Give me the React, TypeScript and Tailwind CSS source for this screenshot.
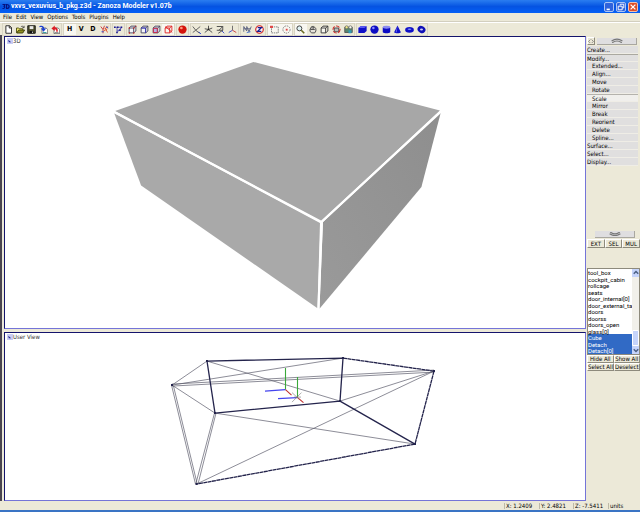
import { useState, type ReactNode } from "react";
import clsx from "clsx";

interface Tool {
  name: string;
  icon: ReactNode;
  pressed?: boolean;
}

interface ToolGroup {
  width: string;
  tools: Tool[];
}

const cube = (
  <>
    <path d="M1.5 4h6v6.500h-6zM1.500 4l2.500-2.500h6.500L7.500 4M10.500 1.500V8L7.500 10.500" fill="#f4f4f8" stroke="#454560" />
  </>
);

const letter = (text: string) => (
  <span className="text-[7px] leading-none font-bold text-black">{text}</span>
);

const svg = (children: ReactNode) => (
  <svg viewBox="0 0 12 12" className="size-[9px]" fill="none" strokeWidth="1.2" aria-hidden="true">
    {children}
  </svg>
);

const TOOL_GROUPS: ToolGroup[] = [
  {
    width: "w-[58px]",
    tools: [
      { name: "New", icon: svg(<path d="M2.500 1h5l2.500 2.500V11h-7.500zM7 1v3h3" fill="#fff" stroke="#222" />) },
      {
        name: "Open",
        icon: svg(
          <>
            <path d="M.700 10.500V4h3l1 1H9v2" fill="#f6ee6a" stroke="#4a4a10" />
            <path d="M1 10.700l2.500-4h8l-2.500 4z" fill="#8f8f20" stroke="#3a3a08" />
            <path d="M6.500 2.500c1.500-1.500 3-1 4 .800M10.800 1v2.500H8.500" stroke="#222" strokeWidth=".9" />
          </>
        ),
      },
      {
        name: "Save",
        icon: svg(
          <>
            <path d="M1 1h10v10H1z" fill="#4c4c28" stroke="#111" />
            <path d="M3.500 1.500h5v4h-5z" fill="#e9e9e9" />
            <path d="M3.500 8h5v3h-5z" fill="#111" />
            <path d="M7 8.500h1V10.500H7z" fill="#eee" />
          </>
        ),
      },
      {
        name: "Import",
        icon: svg(
          <>
            <path d="M4 4h5.500l2 2v5.500H4z" fill="#fff" stroke="#333" strokeWidth=".8" />
            <path d="M.500 1.500c4-1.500 6 0 6.500 3h2.500L6 9 2.500 4.500h2.500c-.500-1.500-2-2-4.500-1.500z" fill="#1d3fd0" />
            <path d="M5 10h5" stroke="#2a9a9a" />
          </>
        ),
      },
      {
        name: "Export",
        icon: svg(
          <>
            <path d="M4 4h5.500l2 2v5.500H4z" fill="#fff" stroke="#333" strokeWidth=".8" />
            <path d="M9 9C9.500 5 8 3 5 3V.500L.500 4.500 5 8V5.500c1.500 0 2.500 1.500 2 3.500z" fill="#dd1c24" />
            <path d="M5 10h5" stroke="#888" />
          </>
        ),
      },
    ],
  },
  {
    width: "w-[46px]",
    tools: [
      { name: "Horizontal", icon: letter("H"), pressed: true },
      { name: "Vertical", icon: letter("V") },
      { name: "Depth", icon: letter("D") },
      {
        name: "Local axes",
        icon: svg(
          <>
            <path d="M1 2l3 4M4 6l2-5M4 6v5" stroke="#c33" />
            <path d="M6 5l5-3M7 4l3 6M5 8l5-3" stroke="#e2542c" />
            <path d="M2 9h3M8 2l3 2" stroke="#2a4ccc" />
          </>
        ),
      },
    ],
  },
  {
    width: "w-[11px]",
    tools: [
      {
        name: "Polygons",
        icon: svg(
          <>
            <path d="M1 3h9L4 10l0-7M10 3L8 7H4" stroke="#5a5ab8" />
            <path d="M0 2h2v2H0zM4 2h2v2H4zM9 2h2v2H9zM7 6h2v2H7zM3 9h2v2H3z" fill="#1b1b8c" />
          </>
        ),
      },
    ],
  },
  {
    width: "w-[47px]",
    tools: [
      { name: "Vertices level", icon: svg(<>{cube}<path d="M1 4h1.500M7 4h1.500M1 10.500h1.500M7 10.500h1.500M10 1.500h1" stroke="#c22" strokeWidth="2" /></>) },
      { name: "Edges level", icon: svg(<>{cube}<path d="M1.500 4h6v6.500" stroke="#3434c8" /></>) },
      { name: "Polygons level", icon: svg(<>{cube}<path d="M2 4.500h5V10H2z" fill="#b6b4e8" stroke="#c24" /></>) },
      {
        name: "Object level",
        icon: svg(<path d="M1.500 4h6v6.500h-6zM1.500 4l2.500-2.500h6.500L7.500 4M10.500 1.500V8L7.500 10.500M2 2l9 8" stroke="#e02020" />),
        pressed: true,
      },
    ],
  },
  {
    width: "w-[11px]",
    tools: [
      {
        name: "Material editor",
        icon: svg(
          <>
            <circle cx="6" cy="6" r="5.500" fill="#d4140c" />
            <circle cx="4.500" cy="4" r="1.800" fill="#ff9a80" />
          </>
        ),
      },
    ],
  },
  {
    width: "w-[47px]",
    tools: [
      { name: "World axes", icon: svg(<><path d="M1 2l4 5 6-5M5 7l-4 3M5 7l5 4" stroke="#555" /><path d="M9 9l3 3" stroke="#34c" /></>) },
      { name: "Object axes", icon: svg(<><path d="M6 1v5L1 10M6 6l5 4M1 5l5 1 5-2" stroke="#444" /><path d="M5 5h2v2H5z" fill="#222" /></>) },
      { name: "Screen axes", icon: svg(<><path d="M1 2h8v5L3 11M9 2L4 7M1 7h8" stroke="#444" /><path d="M8 8l3 3" stroke="#34c" /></>) },
      { name: "Move axes", icon: svg(<><path d="M6 1v6" stroke="#666" /><path d="M6 7l-5 3" stroke="#34c" /><path d="M6 7l5 3" stroke="#c33" /></>) },
    ],
  },
  {
    width: "w-[24px]",
    tools: [
      {
        name: "Animation",
        icon: svg(
          <>
            <path d="M1 9V2l4 6V2l3 7 3-7M1 5h9" stroke="#5b6280" />
            <path d="M5 10l5-1" stroke="#36c" />
          </>
        ),
      },
      {
        name: "Z-buffer",
        icon: svg(
          <>
            <circle cx="6" cy="6" r="5" fill="#fff" stroke="#d01818" strokeWidth="1.500" />
            <path d="M3.500 3.500h5l-5 5h5" stroke="#1c1c90" strokeWidth="1.800" />
          </>
        ),
      },
    ],
  },
  {
    width: "w-[24px]",
    tools: [
      {
        name: "Rectangular selection",
        icon: svg(<><path d="M2 2.500h9v8H2z" stroke="#777" strokeDasharray="2 1" /><path d="M0 1h4v3H0z" fill="#e04848" /></>),
        pressed: true,
      },
      {
        name: "Circular selection",
        icon: svg(<><circle cx="6" cy="6" r="4.800" stroke="#777" strokeDasharray="2 1.200" /><path d="M5 5h2.500v2.500H5z" fill="#e04848" /></>),
        pressed: true,
      },
    ],
  },
  {
    width: "w-[59px]",
    tools: [
      {
        name: "Zoom",
        icon: svg(<><circle cx="4.500" cy="4.500" r="3.300" fill="#dff2f4" stroke="#333" /><path d="M7 7l4 4" stroke="#6b6b20" strokeWidth="2.200" /></>),
        pressed: true,
      },
      {
        name: "Pan",
        icon: svg(<path d="M2.500 6.500L4 3l1.500-1h2l1.500 1 1.500 2v3L9 10.500H5L3 9zM3 6h6M5.500 2.500V5M7.500 2.500V5" fill="#e6e2da" stroke="#444" />),
      },
      { name: "Fit view", icon: svg(<path d="M1.500 4h6v6.500h-6zM1.500 4l2.500-2.500h6.500L7.500 4M10.500 1.500V8L7.500 10.500" fill="#f7f6ee" stroke="#333" />) },
      {
        name: "Rotate view",
        icon: svg(<><path d="M3 4h6v5H3z" fill="#bbb" stroke="#444" /><circle cx="6" cy="6" r="4.700" stroke="#d03030" strokeDasharray="5 2" strokeWidth="1.500" /></>),
      },
      {
        name: "View options",
        icon: svg(
          <>
            <path d="M1 3h10v7H1z" fill="#58866c" stroke="#555" />
            <circle cx="3.500" cy="3" r="2" fill="#f2ec8a" stroke="#555" strokeWidth=".8" />
            <circle cx="8.500" cy="3" r="2" fill="#f8f8f0" stroke="#555" strokeWidth=".8" />
            <path d="M6 7h4v4H6z" fill="#2f9bb8" />
          </>
        ),
      },
    ],
  },
  {
    width: "w-[70px]",
    tools: [
      { name: "Box", icon: svg(<><path d="M.500 4l3-2.500h8V8l-3 2.500h-8z" fill="#1010c8" /><path d="M.500 4h8l3-2.500h-8z" fill="#5a5af4" /></>) },
      { name: "Sphere", icon: svg(<><circle cx="6" cy="6" r="5.500" fill="#0c0cc4" /><circle cx="4.500" cy="4" r="1.700" fill="#8c8cff" /></>) },
      { name: "Cylinder", icon: svg(<><path d="M1 3v6.500c2 2 8 2 10 0V3z" fill="#0c0cc4" /><ellipse cx="6" cy="3" rx="5" ry="1.900" fill="#8a8af0" /></>) },
      { name: "Cone", icon: svg(<><path d="M6 .500L1.500 9.500c1.500 2 7.500 2 9 0z" fill="#1010c8" /><path d="M6 1L3.500 9.500h1.500z" fill="#6868f0" /></>) },
      { name: "Disc", icon: svg(<><ellipse cx="6" cy="6.500" rx="5.800" ry="3.700" fill="#1010c8" /><ellipse cx="6" cy="5.500" rx="2.500" ry="1" fill="#7c8cf8" /></>) },
      { name: "Torus", icon: svg(<><ellipse cx="6" cy="6" rx="5.500" ry="4.500" transform="rotate(30 6 6)" fill="#1010b8" /><ellipse cx="6" cy="6" rx="2" ry="1.400" fill="#cfd2f6" /></>) },
    ],
  },
];

const MENU = ["File", "Edit", "View", "Options", "Tools", "Plugins", "Help"];

const COMMANDS = [
  { label: "Create..." },
  { label: "Modify...", open: true },
  { label: "Extended...", sub: true },
  { label: "Align...", sub: true },
  { label: "Move", sub: true },
  { label: "Rotate", sub: true },
  { label: "Scale", sub: true },
  { label: "Mirror", sub: true },
  { label: "Break", sub: true },
  { label: "Reorient", sub: true },
  { label: "Delete", sub: true },
  { label: "Spline...", sub: true },
  { label: "Surface..." },
  { label: "Select..." },
  { label: "Display..." },
];

const OBJECTS = [
  "tool_box",
  "cockpit_cabin",
  "rollcage",
  "seats",
  "door_internal[0]",
  "door_external_ta",
  "doors",
  "doorss",
  "doors_open",
  "glass[0]",
  "Cube",
  "Detach",
  "Detach[0]",
];

const RAISED = "border border-t-white border-l-white border-r-[#8d8a7c] border-b-[#8d8a7c] bg-[#ece9d8]";

function TitleBar() {
  return (
    <header className="flex h-[13px] shrink-0 items-center bg-linear-to-b from-[#2a7df0] via-[#0553e2] to-[#0560f6] px-[2px] text-white">
      <svg viewBox="0 0 16 12" className="h-[7px] w-2" aria-hidden="true">
        <path d="M1 2h5L4 5.500c3 1 1 5-3 4.500M9 2v8c7 0 7-8 0-8z" fill="none" stroke="#06107c" strokeWidth="2.200" />
      </svg>
      <h1 className="ml-px flex-1 truncate font-[Roboto,sans-serif] text-[7px] leading-[9px] font-bold">
        vxvs_vexuvius_b_pkg.z3d - Zanoza Modeler v1.07b
      </h1>
      <div className="flex gap-[2px]">
        <button aria-label="Minimize" className="flex size-[10px] items-center justify-center rounded-[2px] border border-[#a9c4f5] bg-[#2f63dc]">
          <svg viewBox="0 0 10 10" className="size-2"><path d="M2 8h4" stroke="#fff" strokeWidth="2" /></svg>
        </button>
        <button aria-label="Restore" className="flex size-[10px] items-center justify-center rounded-[2px] border border-[#a9c4f5] bg-[#2f63dc]">
          <svg viewBox="0 0 10 10" className="size-2" fill="none" stroke="#fff" strokeWidth="1.2">
            <path d="M4 3V1.500h4.500V6H7M1.500 4h5v4.500h-5z" />
          </svg>
        </button>
        <button aria-label="Close" className="flex size-[10px] items-center justify-center rounded-[2px] border border-[#f0c0b0] bg-[#dd4f2a]">
          <svg viewBox="0 0 10 10" className="size-2"><path d="M2 2l6 6M8 2l-6 6" stroke="#fff" strokeWidth="1.600" /></svg>
        </button>
      </div>
    </header>
  );
}

function Toolbar() {
  return (
    <div role="toolbar" className="flex h-[13px] shrink-0 items-center gap-[3px] border-t border-white pl-[3px]">
      {TOOL_GROUPS.map((group, i) => (
        <div key={i} className={clsx("flex h-[11px] shrink-0 outline outline-[#d8d4c4]", group.width)}>
          {group.tools.map((tool) => (
            <button
              key={tool.name}
              aria-label={tool.name}
              className={clsx("flex flex-1 items-center justify-center", tool.pressed && "bg-[#f8f7f1]")}
            >
              {tool.icon}
            </button>
          ))}
        </div>
      ))}
    </div>
  );
}

function Viewport({ title, className, children }: { title: string; className: string; children: ReactNode }) {
  return (
    <section
      className={clsx(
        "relative min-h-0 border border-t-[#14146c] border-r-[#7474d8] border-b-[#7474d8] border-l-[#14146c] bg-white",
        className
      )}
    >
      <button className="absolute top-px left-[2px] flex items-center text-[6px] leading-none text-[#333]">
        <svg viewBox="0 0 10 10" className="size-[6px]" aria-hidden="true">
          <path d="M0 0h10v10H0z" fill="#c8ccf4" />
          <path d="M2 3l5 4H3z" fill="#22228c" />
        </svg>
        {title}
      </button>
      {children}
    </section>
  );
}

function SolidBox() {
  return (
    <svg viewBox="5 37 580 291" className="size-full" role="img" aria-label="Shaded box">
      <defs>
        <linearGradient id="side" x1="0" y1="1" x2="1" y2="0">
          <stop offset="0" stopColor="#9a9a9a" />
          <stop offset="1" stopColor="#8e8e8e" />
        </linearGradient>
      </defs>
      <path d="M115 111L253.500 62 440 110.500 321 221.500z" fill="#a7a7a7" />
      <path d="M114 113L320 223 317.500 308.500 141 185.500z" fill="#a9a9a9" />
      <path d="M323 222L441 112 421.500 187 319.500 309z" fill="url(#side)" />
      <path d="M113.500 111.800L321.500 222 441.500 111.200M321.800 222L318.400 310" stroke="#fff" strokeWidth="2.200" fill="none" />
    </svg>
  );
}

function Wireframe() {
  return (
    <svg viewBox="5 333 580 167" className="size-full" fill="none" role="img" aria-label="Wireframe box">
      <g stroke="#5c5c6c" strokeWidth=".7">
        <path d="M207 361L172 385M172 385L343 358M207 361L340 401M172 385L215 413M215 413L415 444M196.500 484L434 371M340 401L434 371M172 384L434 370M172 386L434 372" />
        <path d="M171.500 385L195.500 484M173.500 386L197 483M214.500 413L196 483M216 413L198 484" />
      </g>
      <g stroke="#24244c" strokeWidth="1.300">
        <path d="M207 361L343 358M207 361L215 413M343 358L340 401M215 413L340 401M340 401L415 444" />
        <path d="M343 358L434 371M434 371L415 444M415 444L196.500 484" strokeDasharray="4 .4" />
      </g>
      <g strokeWidth="1.100">
        <path d="M285.500 389.500V368M297.500 397V377" stroke="#3aa83a" />
        <path d="M285.500 389.500L265 391M297 397.500L278 398.500" stroke="#4444ee" />
        <path d="M285.500 389.500L291.500 395M297 397L303.500 402.500" stroke="#c03030" />
        <path d="M292 392.500L299 399M301.500 392.500L292 402M294 397h7" stroke="#777" strokeWidth=".6" />
      </g>
      <path d="M171 384h2v2h-2zM206 360h2v2h-2zM342 357h2v2h-2zM433 370h2v2h-2zM414 443h2v2h-2zM195.500 483h2v2h-2zM214 412h2v2h-2zM339 400h2v2h-2z" fill="#24244c" />
    </svg>
  );
}

function SidePanel() {
  const [command, setCommand] = useState("Scale");
  const [selected, setSelected] = useState(["Cube", "Detach", "Detach[0]"]);

  return (
    <aside className="flex w-[54px] shrink-0 flex-col pt-[2px] pl-px">
      <div className="flex h-2 items-center gap-[2px]">
        <button aria-label="Toggle panel" className={clsx("flex size-2 shrink-0 items-center justify-center", RAISED)}>
          <svg viewBox="0 0 10 8" className="w-[6px] shrink-0" fill="none" stroke="#555"><path d="M4 1L1 4l3 3M6 1l3 3-3 3" /></svg>
        </button>
        <button aria-label="Scroll up" className="flex h-[7px] w-10 items-center justify-center border-r border-b border-[#a9a7a0] bg-[#dfdee0]">
          <svg viewBox="0 0 20 8" className="w-3" fill="none" stroke="#777" strokeWidth="2"><path d="M1 5q9-6 18 0M2 8q8-6 16 0" /></svg>
        </button>
      </div>

      <nav className="mt-px w-[51px]">
        {COMMANDS.map((c) => (
          <button
            key={c.label}
            onClick={() => setCommand(c.label)}
            className={clsx(
              "block h-2 w-full border-b border-b-[#efede6] text-left text-[6px] leading-[7px]",
              c.sub && "pl-[5px]",
              command === c.label ? "border-t border-t-[#b4b2ac] bg-[#f0efec] leading-[6px]" : "bg-[#e0dfdf]",
              c.open && "border-t border-t-[#aaa8a0] leading-[6px]"
            )}
          >
            {c.label}
          </button>
        ))}
      </nav>

      <button aria-label="Scroll down" className="mt-[65px] ml-2 flex h-[7px] w-10 shrink-0 items-center justify-center border-r border-b border-[#a9a7a0] bg-[#dfdee0]">
        <svg viewBox="0 0 20 8" className="w-3" fill="none" stroke="#777" strokeWidth="2"><path d="M1 3q9 6 18 0M2 0q8 6 16 0" /></svg>
      </button>
      <div className="mt-px flex h-[9px] shrink-0 text-[6px] leading-none">
        {["EXT", "SEL", "MUL"].map((mode) => (
          <button key={mode} className={clsx("flex-1", RAISED)}>{mode}</button>
        ))}
      </div>

      {/* Object list */}
      <div className="mt-5 flex h-[87px] shrink-0 border border-[#8d8a7c] bg-white">
        <select
          multiple
          aria-label="Objects"
          value={selected}
          onChange={(e) => setSelected(Array.from(e.target.selectedOptions, (o) => o.value))}
          className="h-full min-w-0 flex-1 appearance-none overflow-hidden font-[Roboto,sans-serif] text-[6px] text-black outline-none"
        >
          {OBJECTS.map((name) => (
            <option
              key={name}
              value={name}
              className="min-h-0 p-0 leading-[6px] odd:h-[7px] even:h-[6px] checked:bg-[#316ac5] checked:bg-linear-to-b checked:from-[#316ac5] checked:to-[#316ac5] checked:text-white!"
            >
              {name}
            </option>
          ))}
        </select>
        <div className="flex w-[7px] shrink-0 flex-col bg-[#f1f0ea]">
          <button aria-label="List up" className="flex h-2 items-center justify-center bg-[#c5d4fb]">
            <svg viewBox="0 0 8 8" className="size-[6px]" fill="none" stroke="#4d6185" strokeWidth="2"><path d="M1 5l3-3 3 3" /></svg>
          </button>
          <div className="mt-[53px] flex-1 rounded-[1px] border border-white bg-[#c5d4fb]" />
          <button aria-label="List down" className="flex h-2 items-center justify-center bg-[#c5d4fb]">
            <svg viewBox="0 0 8 8" className="size-[6px]" fill="none" stroke="#4d6185" strokeWidth="2"><path d="M1 3l3 3 3-3" /></svg>
          </button>
        </div>
      </div>
      <div className="grid shrink-0 grid-cols-2 text-[6px] leading-none whitespace-nowrap">
        {["Hide All", "Show All", "Select All", "Deselect"].map((label) => (
          <button key={label} className={clsx("h-2", RAISED)}>{label}</button>
        ))}
      </div>
    </aside>
  );
}

export default function App() {
  return (
    <div className="flex h-screen flex-col overflow-hidden bg-[#ece9d8] font-['DejaVu_Sans_Condensed','DejaVu_Sans',sans-serif] text-[6px] leading-none text-black">
      <TitleBar />
      <nav className="flex h-[9px] shrink-0 items-center gap-1 border-b border-[#d3cfbf] pl-[3px]">
        {MENU.map((item) => (
          <button key={item}>{item}</button>
        ))}
      </nav>
      <Toolbar />

      <div className="flex min-h-0 flex-1 border-l-2 border-[#4a4550]">
        <main className="flex min-w-0 flex-1 flex-col gap-[3px] pt-px pl-[2px]">
          <Viewport title="3D" className="flex-[294]">
            <SolidBox />
          </Viewport>
          <Viewport title="User View" className="flex-[169]">
            <Wireframe />
          </Viewport>
        </main>
        <SidePanel />
      </div>

      <footer className="flex h-[11px] shrink-0 items-center justify-end gap-px border-b-2 border-[#3a74c4] pt-px">
        <span className="w-[34px] border-l border-[#bdb9a8] pl-px">X: 1.2409</span>
        <span className="w-[33px] border-l border-[#bdb9a8] pl-px">Y: 2.4821</span>
        <span className="w-[34px] border-l border-[#bdb9a8] pl-px">Z: -7.5411</span>
        <span className="w-8 border-l border-[#bdb9a8] pl-px">units</span>
      </footer>
    </div>
  );
}
